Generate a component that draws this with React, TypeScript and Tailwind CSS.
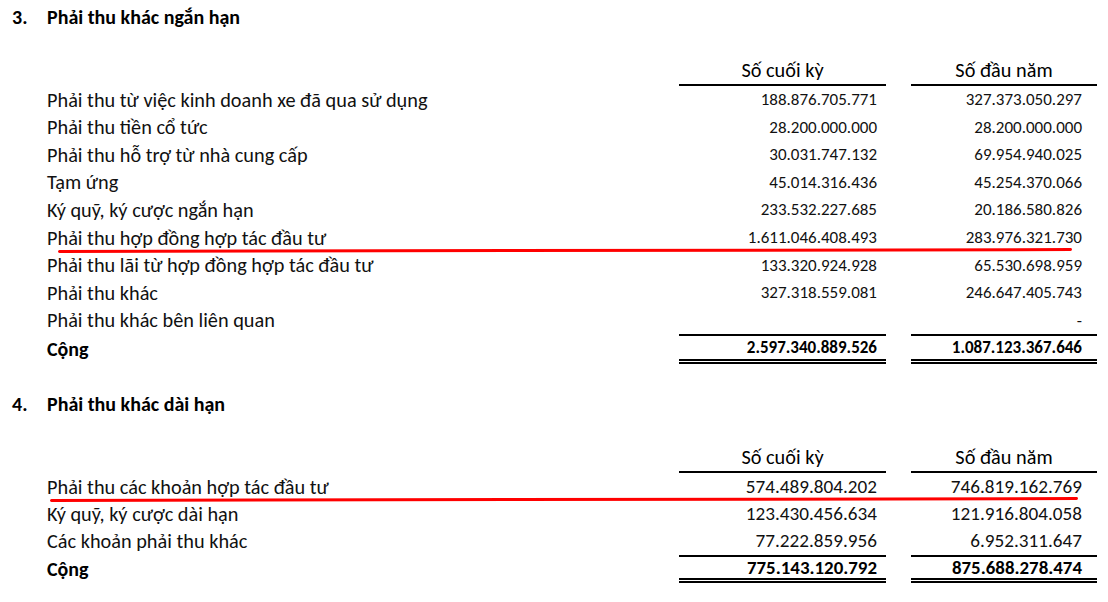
const font = { fontFamily: 'Carlito, Calibri, Lato, "Liberation Sans", sans-serif' };

type Row = { label: string; a: string; b: string; mark?: [number, number] };

const shortTerm: Row[] = [
  { label: 'Phải thu từ việc kinh doanh xe đã qua sử dụng', a: '188.876.705.771', b: '327.373.050.297' },
  { label: 'Phải thu tiền cổ tức', a: '28.200.000.000', b: '28.200.000.000' },
  { label: 'Phải thu hỗ trợ từ nhà cung cấp', a: '30.031.747.132', b: '69.954.940.025' },
  { label: 'Tạm ứng', a: '45.014.316.436', b: '45.254.370.066' },
  { label: 'Ký quỹ, ký cược ngắn hạn', a: '233.532.227.685', b: '20.186.580.826' },
  { label: 'Phải thu hợp đồng hợp tác đầu tư', a: '1.611.046.408.493', b: '283.976.321.730', mark: [11, 1014] },
  { label: 'Phải thu lãi từ hợp đồng hợp tác đầu tư', a: '133.320.924.928', b: '65.530.698.959' },
  { label: 'Phải thu khác', a: '327.318.559.081', b: '246.647.405.743' },
  { label: 'Phải thu khác bên liên quan', a: '', b: '-' },
];

const longTerm: Row[] = [
  { label: 'Phải thu các khoản hợp tác đầu tư', a: '574.489.804.202', b: '746.819.162.769', mark: [3, 1028] },
  { label: 'Ký quỹ, ký cược dài hạn', a: '123.430.456.634', b: '121.916.804.058' },
  { label: 'Các khoản phải thu khác', a: '77.222.859.956', b: '6.952.311.647' },
];

function Section({ no, title, rows, total, big }: { no: string; title: string; rows: Row[]; total: [string, string]; big?: boolean }) {
  const num = big ? 'text-[19.2px]' : 'text-[17px]';
  const sum = big ? 'text-[18.9px] h-[28px]' : 'text-[17px] h-[30px]';
  const rowH = big ? 'h-[27.3px]' : 'h-[27.6px]';
  return (
    <section>
      <h2 className="flex items-center h-[34px] text-[20px] font-bold text-black">
        <span className="w-[35px]">{no}</span>
        <span>{title}</span>
      </h2>
      <div className="ml-[35px] mt-[23px] grid grid-cols-[632px_207px_25px_186px]">
        <div />
        <div className="border-b-2 border-black text-center text-[20.3px] leading-[26px] pb-[1px]">Số cuối kỳ</div>
        <div />
        <div className="border-b-2 border-black text-center text-[20.3px] leading-[26px] pb-[1px]">Số đầu năm</div>
        {rows.map((r) => (
          <div key={r.label} className="contents">
            <div className={`relative ${rowH} flex items-center text-[20.3px] text-[#111]`}>
              {r.label}
              {r.mark && (
                <div
                  className="absolute top-[25px] h-[3.4px] rounded-full bg-[#ff0000] -rotate-[0.1deg]"
                  style={{ left: r.mark[0], width: r.mark[1] }}
                />
              )}
            </div>
            <div className={`${rowH} flex items-center justify-end pr-[9px] ${num} text-[#111]`}>{r.a}</div>
            <div />
            <div className={`${rowH} flex items-center justify-end pr-[15px] ${num} text-[#111]`}>{r.b}</div>
          </div>
        ))}
        <div className={`${sum} flex items-center text-[20px] font-bold`}>Cộng</div>
        <div className={`${sum} border-t-2 border-b-[5px] border-black flex items-center justify-end pr-[9px] font-bold`} style={{ borderBottomStyle: 'double' }}>
          {total[0]}
        </div>
        <div />
        <div className={`${sum} border-t-2 border-b-[5px] border-black flex items-center justify-end pr-[15px] font-bold`} style={{ borderBottomStyle: 'double' }}>
          {total[1]}
        </div>
      </div>
    </section>
  );
}

export default function App() {
  return (
    <div className="w-[1108px] h-[602px] bg-white overflow-hidden pl-[12px] text-black" style={font}>
      <Section
        no="3."
        title="Phải thu khác ngắn hạn"
        rows={shortTerm}
        total={['2.597.340.889.526', '1.087.123.367.646']}
      />
      <div className="h-[23px]" />
      <Section
        no="4."
        title="Phải thu khác dài hạn"
        rows={longTerm}
        total={['775.143.120.792', '875.688.278.474']}
        big
      />
    </div>
  );
}
